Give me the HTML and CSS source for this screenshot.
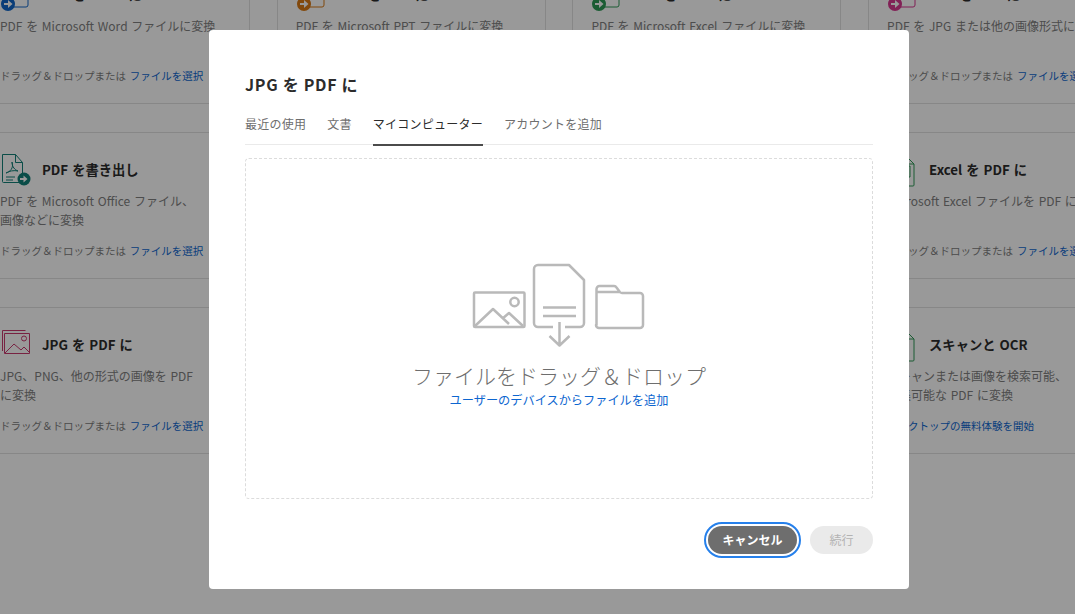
FILE: index.html
```html
<!DOCTYPE html>
<html lang="ja">
<head>
<meta charset="utf-8">
<title>JPG を PDF に</title>
<link rel="stylesheet" href="styles.css">
</head>
<body>
<main class="tools">
  <article class="card">
    <div class="card-head"><svg class="ico ico-blue" viewBox="0 0 32 36"><path class="o" d="M8 4h18a2 2 0 0 1 2 2v22a2 2 0 0 1-2 2H12"/><circle class="f" cx="8" cy="27" r="7"/><path class="w" d="M4 26h4v-3l4.500 4-4.500 4v-3H4z"/></svg><h2>PDF を Word に</h2></div>
    <p class="desc">PDF を Microsoft Word ファイルに変換</p>
    <p class="foot">ドラッグ＆ドロップまたは <a>ファイルを選択</a></p>
  </article>
  <article class="card">
    <div class="card-head"><svg class="ico ico-orange" viewBox="0 0 32 36"><path class="o" d="M8 4h18a2 2 0 0 1 2 2v22a2 2 0 0 1-2 2H12"/><circle class="f" cx="8" cy="27" r="7"/><path class="w" d="M4 26h4v-3l4.500 4-4.500 4v-3H4z"/></svg><h2>PDF を PPT に</h2></div>
    <p class="desc">PDF を Microsoft PPT ファイルに変換</p>
    <p class="foot">ドラッグ＆ドロップまたは <a>ファイルを選択</a></p>
  </article>
  <article class="card">
    <div class="card-head"><svg class="ico ico-green" viewBox="0 0 32 36"><path class="o" d="M8 4h18a2 2 0 0 1 2 2v22a2 2 0 0 1-2 2H12"/><circle class="f" cx="8" cy="27" r="7"/><path class="w" d="M4 26h4v-3l4.500 4-4.500 4v-3H4z"/></svg><h2>PDF を Excel に</h2></div>
    <p class="desc">PDF を Microsoft Excel ファイルに変換</p>
    <p class="foot">ドラッグ＆ドロップまたは <a>ファイルを選択</a></p>
  </article>
  <article class="card">
    <div class="card-head"><svg class="ico ico-pink" viewBox="0 0 32 36"><path class="o" d="M8 4h18a2 2 0 0 1 2 2v22a2 2 0 0 1-2 2H12"/><circle class="f" cx="8" cy="27" r="7"/><path class="w" d="M4 26h4v-3l4.500 4-4.500 4v-3H4z"/></svg><h2>PDF を JPG に</h2></div>
    <p class="desc">PDF を JPG または他の画像形式に変換</p>
    <p class="foot">ドラッグ＆ドロップまたは <a>ファイルを選択</a></p>
  </article>

  <article class="card">
    <div class="card-head"><svg class="ico ico-teal" viewBox="0 0 32 36"><path class="o" d="M2.500 2.500h13l7 8v19a1 1 0 0 1-1 1H3.500a1 1 0 0 1-1-1zM15.500 2.500v8h7"/><path class="o" d="M6 21c4-1 8-5 6-11 0 5 3 8 6 9-4-1-9 0-12 2zM6 25h9M6 28h7"/><circle class="f" cx="24" cy="27" r="6.500"/><path class="w" d="M20 26h3.500v-2.500l4 3.500-4 3.500V28H20z"/></svg><h2>PDF を書き出し</h2></div>
    <p class="desc">PDF を Microsoft Office ファイル、<br>画像などに変換</p>
    <p class="foot">ドラッグ＆ドロップまたは <a>ファイルを選択</a></p>
  </article>
  <article class="card">
    <div class="card-head"><svg class="ico ico-blue" viewBox="0 0 32 36"><path class="o" d="M4 3h14l8 8v20H4z"/></svg><h2>PDF を編集</h2></div>
    <p class="desc">PDF にテキストや画像を追加</p>
    <p class="foot">ドラッグ＆ドロップまたは <a>ファイルを選択</a></p>
  </article>
  <article class="card">
    <div class="card-head"><svg class="ico ico-orange" viewBox="0 0 32 36"><path class="o" d="M4 3h14l8 8v20H4z"/></svg><h2>PPT を PDF に</h2></div>
    <p class="desc">Microsoft PPT ファイルを PDF に変換</p>
    <p class="foot">ドラッグ＆ドロップまたは <a>ファイルを選択</a></p>
  </article>
  <article class="card">
    <div class="card-head"><svg class="ico ico-green" viewBox="0 0 32 36"><path class="o" d="M5 5h15l7 7v21a1 1 0 0 1-1 1H5zM20 5v7h7M12 14h11v11H12zM17.500 14v11"/></svg><h2>Excel を PDF に</h2></div>
    <p class="desc">Microsoft Excel ファイルを PDF に変換</p>
    <p class="foot">ドラッグ＆ドロップまたは <a>ファイルを選択</a></p>
  </article>

  <article class="card">
    <div class="card-head"><svg class="ico ico-pink" viewBox="0 0 32 36"><path class="o" d="M2.500 24V3.500h23"/><path class="o" d="M4.500 6.500h25v20h-25zM5 26l9-9 7 6 3-3 5 5"/><circle class="o" cx="24" cy="11.500" r="2.500"/></svg><h2>JPG を PDF に</h2></div>
    <p class="desc">JPG、PNG、他の形式の画像を PDF<br>に変換</p>
    <p class="foot">ドラッグ＆ドロップまたは <a>ファイルを選択</a></p>
  </article>
  <article class="card">
    <div class="card-head"><svg class="ico ico-blue" viewBox="0 0 32 36"><path class="o" d="M4 3h14l8 8v20H4z"/></svg><h2>PDF を結合</h2></div>
    <p class="desc">複数のファイルを 1 つの PDF に結合</p>
    <p class="foot">ドラッグ＆ドロップまたは <a>ファイルを選択</a></p>
  </article>
  <article class="card">
    <div class="card-head"><svg class="ico ico-pink" viewBox="0 0 32 36"><path class="o" d="M4 3h14l8 8v20H4z"/></svg><h2>PDF を整理</h2></div>
    <p class="desc">ページを並べ替え、回転、削除</p>
    <p class="foot">ドラッグ＆ドロップまたは <a>ファイルを選択</a></p>
  </article>
  <article class="card">
    <div class="card-head"><svg class="ico ico-green" viewBox="0 0 32 36"><path class="o" d="M5 5h15l7 7v21a1 1 0 0 1-1 1H5zM20 5v7h7"/></svg><h2>スキャンと OCR</h2></div>
    <p class="desc">スキャンまたは画像を検索可能、<br>編集可能な PDF に変換</p>
    <p class="foot"><a>デスクトップの無料体験を開始</a></p>
  </article>
</main>

<div class="overlay">
  <section class="modal">
    <h1>JPG を PDF に</h1>
    <nav class="tabs">
      <span class="tab">最近の使用</span>
      <span class="tab">文書</span>
      <span class="tab active">マイコンピューター</span>
      <span class="tab">アカウントを追加</span>
    </nav>
    <div class="drop">
      <svg class="drop-art" viewBox="469 260 180 90">
        <g class="art">
          <rect x="474" y="292.500" width="50.500" height="34.500" rx="1"/>
          <path d="M475 326l18-17 16 15M502 319l7-6 14 13"/>
          <circle cx="514.500" cy="302" r="4.200"/>
          <path d="M553 327h-15a4 4 0 0 1-4-4v-54a4 4 0 0 1 4-4h31l15 15v43a4 4 0 0 1-4 4h-15"/>
          <path d="M543 307.500h33M543 316h33"/>
          <path d="M559.500 322v23.500M549.500 336l10 9.500 10-9.500"/>
          <path d="M596.500 325v-36a3 3 0 0 1 3-3h14.500a3 3 0 0 1 2.500 1.500l3 4a3 3 0 0 0 2.500 1.500h18a3 3 0 0 1 3 3v29a3 3 0 0 1-3 3h-41a3 3 0 0 1-3-3zM596.500 292h23"/>
        </g>
      </svg>
      <p class="drop-title">ファイルをドラッグ＆ドロップ</p>
      <a class="drop-link">ユーザーのデバイスからファイルを追加</a>
    </div>
    <div class="actions">
      <button class="btn btn-cancel" type="button">キャンセル</button>
      <button class="btn btn-next" type="button">続行</button>
    </div>
  </section>
</div>
</body>
</html>
```
FILE: styles.css
```css
* {
  box-sizing: border-box;
}

html,
body {
  height: 100%;
}

body {
  margin: 0;
  overflow: hidden;
  background: #fff;
  color: #2c2c2c;
  font-family: "Noto Sans CJK JP", "Noto Sans", sans-serif;
}

.tools {
  display: grid;
  grid-template-columns: repeat(4, 269px);
  grid-auto-rows: 147px;
  gap: 28px 26.700px;
  margin: -43px 0 0 -19px;
  width: 1200px;
}

.card {
  border: 1px solid #e1e1e1;
  padding: 19px 18px 0;
}

.card-head {
  display: flex;
  align-items: center;
  gap: 10px;
  height: 36px;
}

.ico {
  flex: none;
  width: 32px;
  height: 36px;
  fill: none;
}

.ico .o {
  fill: none;
  stroke: currentColor;
  stroke-width: 1;
}

.ico .f {
  fill: currentColor;
}

.ico .w {
  fill: #fff;
}

.ico-blue { color: #1267c9; }
.ico-orange { color: #d97a17; }
.ico-green { color: #2e9a56; }
.ico-pink { color: #d83790; }
.ico-teal { color: #128078; }

.card:nth-child(9) .ico { color: #c93a6e; }

.card h2 {
  margin: 0;
  font-size: 13.300px;
  font-weight: 700;
  line-height: 20px;
  word-spacing: 1px;
  color: #2c2c2c;
}

.desc {
  margin: 3px 0 0;
  min-height: 38px;
  font-size: 12px;
  line-height: 19px;
  word-spacing: 1px;
  color: #808080;
  white-space: nowrap;
}

.foot {
  margin: 13px 0 0;
  font-size: 10.500px;
  line-height: 18px;
  word-spacing: 1.500px;
  color: #808080;
  white-space: nowrap;
}

.foot a {
  color: #0d66d0;
}

.overlay {
  position: fixed;
  inset: 0;
  padding: 30px 0 0 209px;
  background: rgba(0, 0, 0, 0.4);
}

.modal {
  display: flex;
  flex-direction: column;
  width: 700px;
  height: 559px;
  padding: 42px 36px 0;
  background: #fff;
  border-radius: 4px;
}

.modal h1 {
  margin: 0;
  font-size: 16px;
  font-weight: 700;
  line-height: 24px;
  letter-spacing: 0.700px;
  color: #2c2c2c;
}

.tabs {
  display: flex;
  gap: 21px;
  margin-top: 14px;
  height: 35px;
  border-bottom: 1px solid #eaeaea;
}

.tab {
  height: 36px;
  font-size: 12px;
  letter-spacing: 0.250px;
  line-height: 18px;
  padding-top: 5px;
  color: #6e6e6e;
}

.tab.active {
  color: #2c2c2c;
  border-bottom: 2px solid #4b4b4b;
}

.drop {
  display: flex;
  flex-direction: column;
  align-items: center;
  height: 341px;
  margin-top: 13px;
  padding-top: 101px;
  border: 1px dashed #dcdcdc;
  border-radius: 4px;
}

.drop-art {
  width: 180px;
  height: 90px;
}

.art {
  fill: none;
  stroke: #b9b9b9;
  stroke-width: 2.500;
  stroke-linejoin: round;
}

.drop-title {
  margin: 10px 0 0;
  font-size: 21px;
  font-weight: 300;
  line-height: 30px;
  color: #6e6e6e;
}

.drop-link {
  margin-top: 1px;
  font-size: 12.200px;
  line-height: 18px;
  color: #0d66d0;
}

.actions {
  display: flex;
  justify-content: flex-end;
  align-items: center;
  gap: 13px;
  margin-top: 27px;
}

.btn {
  height: 28px;
  border: 0;
  border-radius: 14px;
  font-family: inherit;
  font-size: 12px;
  font-weight: 700;
  padding: 0 0 2px;
}

.btn-cancel {
  width: 89px;
  background: #6e6e6e;
  color: #fff;
  outline: 2px solid #2680eb;
  outline-offset: 2px;
}

.btn-next {
  width: 63px;
  background: #eaeaea;
  color: #b3b3b3;
  font-weight: 400;
}
```
